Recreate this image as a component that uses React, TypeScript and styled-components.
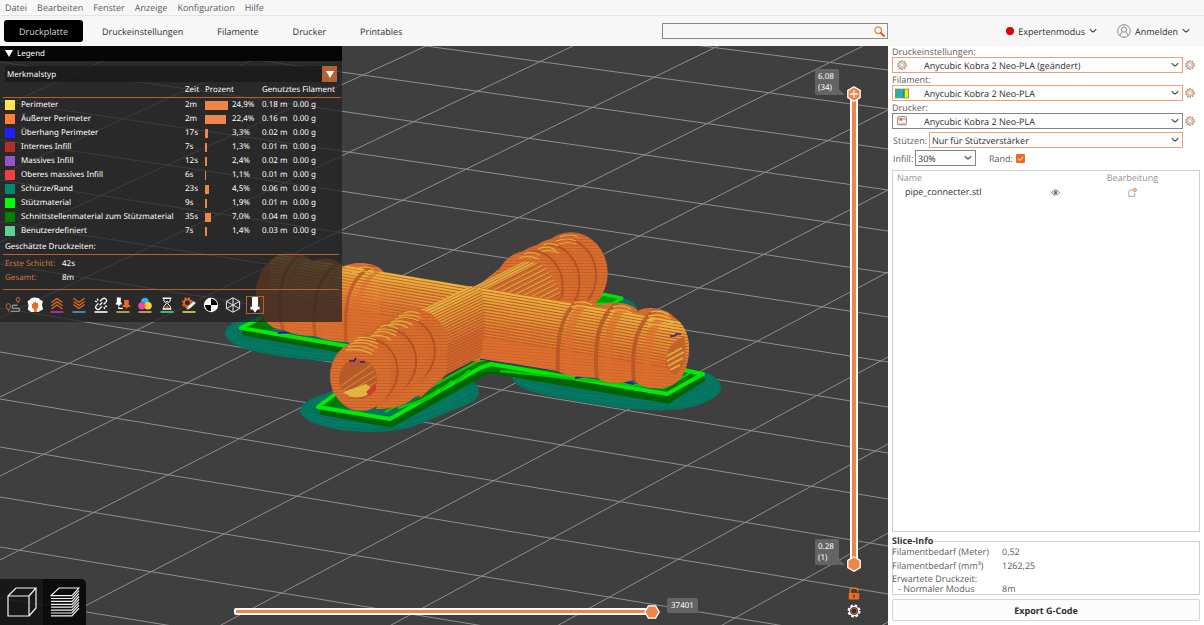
import React from "react";
import styled, { createGlobalStyle, css } from "styled-components";

const ORANGE = "#ed6b21";
const SOFT_ORANGE = "#ee8549";
const UI_FONT = `"Open Sans", "Noto Sans", sans-serif`;
const OVERLAY_FONT = `"Noto Sans", "Open Sans", sans-serif`;

const GlobalStyle = createGlobalStyle`
  * { box-sizing: border-box; }
  html, body, #root { height: 100%; }
  body { margin: 0; background: #fff; font-family: ${UI_FONT}; font-size: 9px; color: #3c3c3c; text-rendering: geometricPrecision; }
  button, input, select { font: inherit; color: inherit; margin: 0; text-rendering: inherit; }
  button { background: none; border: 0; padding: 0; cursor: pointer; }
`;

/* ---------- Page frame ---------- */

const Page = styled.div`
  display: flex;
  flex-direction: column;
  min-height: 100vh;
`;

const MenuBar = styled.nav`
  display: flex;
  gap: 10px;
  height: 16px;
  padding: 0 5px;
  background: #f7f7f7;
  border-bottom: 1px solid #e4e4e4;
`;

const MenuItem = styled.button`
  line-height: 16px;
  color: #5c5c5c;
`;

const TabBar = styled.header`
  display: flex;
  align-items: center;
  height: 30px;
  padding-left: 4px;
  background: #f7f7f7;
`;

const Tab = styled.button<{ $active?: boolean }>`
  height: 22px;
  margin-right: ${(p) => (p.$active ? 2 : 0)}px;
  padding: 0 ${(p) => (p.$active ? 15 : 17)}px;
  border-radius: 3px;
  background: ${(p) => (p.$active ? "#000" : "transparent")};
  color: ${(p) => (p.$active ? "#d8d8d8" : "#2e2e2e")};
`;

const SearchBox = styled.label`
  display: flex;
  align-items: center;
  width: 226px;
  height: 16px;
  margin-left: auto;
  padding-right: 2px;
  border: 1px solid #8b8b8b;
  background: #f7f7f7;
`;

const SearchInput = styled.input`
  flex: 1;
  min-width: 0;
  height: 14px;
  border: 0;
  outline: 0;
  padding: 0 4px;
  background: transparent;
`;

const Account = styled.div`
  display: flex;
  align-items: center;
  justify-content: flex-end;
  gap: 20px;
  width: 316px;
  padding-right: 14px;
  color: #2e2e2e;
`;

const AccountButton = styled.button`
  display: flex;
  align-items: center;
  gap: 4px;
`;

const ModeDot = styled.span`
  width: 8px;
  height: 8px;
  border-radius: 50%;
  background: #e50000;
`;

const Body = styled.main`
  display: flex;
  flex: 1;
`;

/* ---------- Viewport ---------- */

const Viewport = styled.section`
  position: relative;
  flex: 1;
  min-width: 0;
  overflow: hidden;
  background: #3f3f3f;
  font-family: ${OVERLAY_FONT};
  font-size: 8px;
  color: #fff;
`;

const Scene = styled.svg`
  position: absolute;
  inset: 0;
  width: 100%;
  height: 100%;
`;

const LegendPanel = styled.div`
  position: absolute;
  top: 0;
  left: 0;
  width: 342px;
  padding-bottom: 8px;
  background: rgba(34, 34, 34, 0.76);
`;

const LegendTitle = styled.h2`
  display: flex;
  align-items: center;
  gap: 4px;
  height: 15px;
  margin: 0 0 5px;
  padding-left: 5px;
  background: #060606;
  font-size: 8px;
  font-weight: 400;
`;

const FeatureSelectBox = styled.div`
  display: flex;
  height: 16px;
  margin: 0 5px 1px;
  background: rgba(24, 24, 24, 0.75);
`;

const FeatureSelect = styled.select`
  flex: 1;
  appearance: none;
  border: 0;
  outline: 0;
  padding: 0 2px;
  background: transparent;
`;

const FeatureArrow = styled.span`
  display: grid;
  place-items: center;
  width: 15px;
  background: #b36234;
`;

const LegendTable = styled.table`
  width: 338px;
  margin-left: 3px;
  border-collapse: separate;
  border-spacing: 0;
  table-layout: fixed;
  white-space: nowrap;

  th, td { padding: 0; font-weight: 400; text-align: left; line-height: 12px; }
  thead th { height: 15px; border-bottom: 1px solid #b36234; }
  tbody tr { height: 14px; }
`;

const Swatch = styled.span<{ $color: string }>`
  display: block;
  width: 10px;
  height: 10px;
  margin-left: 2px;
  background: ${(p) => p.$color};
`;

const Bar = styled.span`
  display: block;
  height: 9px;
  background: ${SOFT_ORANGE};
`;

const TimesTitle = styled.h3`
  margin: 2px 3px 0;
  padding: 0 2px 1px;
  border-bottom: 1px solid #b36234;
  font-size: 8px;
  font-weight: 400;
  line-height: 13px;
`;

const Times = styled.dl`
  display: grid;
  grid-template-columns: 57px 1fr;
  row-gap: 2px;
  margin: 0 3px;
  padding: 3px 2px 5px;
  border-bottom: 1px solid #b36234;
  line-height: 12px;

  dt { color: #d2753f; }
  dd { margin: 0; }
`;

const LegendTools = styled.div`
  display: flex;
  gap: 4px;
  margin: 6px 4px 0;
`;

const LegendTool = styled.button<{ $active?: boolean }>`
  display: grid;
  place-items: center;
  width: 18px;
  height: 18px;
  border: 1px solid ${(p) => (p.$active ? "#b36234" : "transparent")};
`;

const LayerRail = styled.div`
  position: absolute;
  top: 40px;
  right: 26px;
  bottom: 6px;
  display: flex;
  flex-direction: column;
  align-items: center;
  width: 16px;
`;

const LayerTrack = styled.div`
  position: relative;
  flex: 1;
  width: 8px;
  margin: 7px 0 20px;
  border: 2px solid #fff;
  background: ${SOFT_ORANGE};
`;

const RailButton = styled.button`
  display: grid;
  place-items: center;
  width: 16px;
  height: 17px;
`;

const handleSpot = {
  top: css`top: -9px; left: -6px;`,
  bottom: css`bottom: -9px; left: -6px;`,
  right: css`right: -9px; top: -6px;`,
};

const Handle = styled.svg<{ $at: keyof typeof handleSpot }>`
  position: absolute;
  width: 16px;
  height: 16px;
  ${(p) => handleSpot[p.$at]}
`;

const RangeInput = styled.input<{ $vertical?: boolean }>`
  position: absolute;
  inset: 0;
  width: 100%;
  height: 100%;
  opacity: 0;
  ${(p) => p.$vertical && css`writing-mode: vertical-lr;`}
`;

const LayerTag = styled.output<{ $end: "top" | "bottom" }>`
  position: absolute;
  right: 17px;
  ${(p) => (p.$end === "top" ? css`top: -26px;` : css`bottom: -2px;`)}
  width: 24px;
  height: 26px;
  padding: 2px 3px;
  border-radius: 2px;
  background: #646464;
  line-height: 11px;

  &::after {
    content: "";
    position: absolute;
    right: -6px;
    bottom: 0;
    border: 3px solid transparent;
    border-bottom-color: #646464;
    border-left-color: #646464;
  }
`;

const MoveTrack = styled.div`
  position: absolute;
  left: 234px;
  right: 235px;
  bottom: 10px;
  height: 7px;
  border: 2px solid #fff;
  border-radius: 2px;
  background: ${SOFT_ORANGE};
`;

const MoveTag = styled.output`
  position: absolute;
  right: -47px;
  bottom: 0;
  width: 31px;
  border-radius: 2px;
  background: #646464;
  line-height: 15px;
  text-align: center;
`;

const ViewSwitch = styled.div`
  position: absolute;
  left: 0;
  bottom: 0;
  display: flex;
  border-top-right-radius: 5px;
  overflow: hidden;
`;

const ViewButton = styled.button<{ $active?: boolean }>`
  display: grid;
  place-items: center;
  width: 43px;
  height: 46px;
  background: ${(p) => (p.$active ? "rgba(8, 8, 8, .92)" : "rgba(18, 18, 18, .85)")};
`;

/* ---------- Side panel ---------- */

const Side = styled.aside`
  display: flex;
  flex-direction: column;
  width: 316px;
  padding: 0 4px 4px;
  background: #fff;
`;

const Presets = styled.div`
  display: flex;
  flex-direction: column;
  gap: 1px;
  margin-bottom: 3px;
`;

const PresetLabel = styled.label`
  display: block;
  line-height: 11px;
  color: #5c5c5c;
`;

const PresetRow = styled.div`
  display: flex;
  align-items: center;
  gap: 2px;
`;

const Combo = styled.div<{ $modified?: boolean; $width?: number }>`
  display: flex;
  align-items: center;
  flex: ${(p) => (p.$width ? "none" : 1)};
  width: ${(p) => (p.$width ? `${p.$width}px` : "auto")};
  height: 16px;
  padding: 0 3px 0 2px;
  border: 1px solid ${(p) => (p.$modified ? "#efa078" : "#858585")};
  background: #fdfdfd;
`;

const ComboIcon = styled.span`
  display: flex;
  align-items: center;
  justify-content: center;
  width: 14px;
  margin-right: 15px;
`;

const ComboSelect = styled.select`
  flex: 1;
  min-width: 0;
  height: 14px;
  appearance: none;
  border: 0;
  outline: 0;
  padding: 0;
  background: transparent;
  color: #2e2e2e;
`;

const GearButton = styled.button`
  display: grid;
  align-items: center;
  justify-items: start;
  width: 15px;
  height: 16px;
`;

const OptionRow = styled.div`
  display: flex;
  align-items: center;
  height: 16px;
  margin: 0 17px 2px 1px;
  color: #5c5c5c;
`;

const OptionLabel = styled.label<{ $wide?: boolean }>`
  width: ${(p) => (p.$wide ? 36 : 22)}px;
  white-space: nowrap;
`;

const BrimField = styled.label`
  display: flex;
  align-items: center;
  gap: 3px;
  margin-left: 13px;
`;

const TickWrap = styled.span`
  display: grid;
  width: 9px;
  height: 9px;

  > * { grid-area: 1 / 1; }
  svg { pointer-events: none; z-index: 1; }
`;

const Tick = styled.input`
  appearance: none;
  width: 9px;
  height: 9px;
  border-radius: 1px;
  background: ${ORANGE};
`;

const ObjectBox = styled.div`
  flex: 1;
  margin-top: 2px;
  border: 1px solid #cfcfcf;
`;

const ObjectTable = styled.table`
  width: 100%;
  border-collapse: collapse;
  table-layout: fixed;

  th, td { padding: 0; line-height: 14px; text-align: center; }
  th { font-weight: 400; color: #929292; }
  th:first-child { padding-left: 4px; text-align: left; }
  td:first-child { padding-left: 12px; text-align: left; color: #2e2e2e; }
  svg { display: block; margin: 0 auto; }
`;

const SliceInfo = styled.fieldset`
  min-width: 0;
  margin: 4px 0;
  padding: 0;
  border: 1px solid #cfcfcf;

  legend { margin-left: -1px; padding: 0; line-height: 10px; font-weight: 700; color: #333; }
`;

const SliceTable = styled.table`
  border-collapse: collapse;
  color: #5c5c5c;
  margin-left: -1px;

  th, td { padding: 0; line-height: 12px; font-weight: 400; text-align: left; }
  th { width: 110px; }
`;

const SliceRow = styled.tr<{ $spaced?: boolean; $tight?: boolean; $indent?: boolean }>`
  && > * {
    padding-block: ${(p) => (p.$spaced ? 2 : 0)}px;
    line-height: ${(p) => (p.$tight ? 10 : 12)}px;
  }
  && > th { padding-left: ${(p) => (p.$indent ? 6 : 0)}px; }
`;

const ExportButton = styled.button`
  height: 22px;
  border: 1px solid #d4d4d4;
  border-radius: 2px;
  background: #fcfcfc;
  font-weight: 700;
  color: #2e2e2e;
`;

/* ---------- Small icons ---------- */

const Chevron = () => (
  <svg width="8" height="6" viewBox="0 0 8 6" fill="none" stroke="#4a4a4a" strokeWidth="1.1">
    <path d="M.8 1.2 Q2.6 3.6 4 3.9 Q5.4 3.6 7.2 1.2" />
  </svg>
);

const Gear = () => (
  <svg width="10" height="10" viewBox="0 0 10 10" fill="none">
    <circle cx="5" cy="5" r="4" stroke="#8a7a70" strokeWidth="1.4" strokeDasharray="1.6 .9" />
    <circle cx="5" cy="5" r="3" stroke="#f0b08a" strokeWidth="1.2" />
    <circle cx="5" cy="5" r="1.8" fill="#fff" stroke="#b9a89e" strokeWidth=".6" />
  </svg>
);

const FilamentIcon = () => (
  <svg width="16" height="11" viewBox="0 0 16 11">
    <rect x=".5" y=".5" width="15" height="10" fill="#27b0b0" stroke="#7c8a5a" />
    <rect x="10" y="1" width="1" height="9" fill="#333" />
    <rect x="11" y="1" width="4" height="9" fill="#fbf000" />
  </svg>
);

const PrinterIcon = () => (
  <svg width="10" height="10" viewBox="0 0 10 10" fill="none">
    <rect x=".7" y=".7" width="8.6" height="8" rx=".6" stroke="#808080" />
    <path d="M1 3h8" stroke="#d98a62" />
    <rect x="2.6" y="2" width="2.6" height="2.8" fill={ORANGE} />
    <path d="M2 7.3h6" stroke="#b5b5b5" strokeWidth=".7" />
  </svg>
);

const Hexagon = ({ at, plus }: { at: "top" | "bottom" | "right"; plus?: boolean }) => (
  <Handle $at={at} viewBox="0 0 16 16">
    <path d="M8 .8 14.2 4.4V11.6L8 15.2 1.8 11.6V4.4Z" fill={SOFT_ORANGE} stroke="#fff" strokeWidth="1.3"
      transform={at === "right" ? "rotate(90 8 8)" : undefined} />
    {plus && <path d="M8 4.2v7.6M4.2 8h7.6" stroke="#fff" strokeWidth="1.3" />}
  </Handle>
);

/* ---------- Legend tool icons ---------- */

const toolIcons: { name: string; art: React.ReactNode }[] = [
  { name: "Eilgang", art: (<>
    <path d="M3 12.4 1.6 10.2a2.2 2.2 0 1 1 3.6 0L3.4 14Z" fill="none" stroke="#a3603c" strokeWidth="1.1" />
    <path d="M13 5.6 11.4 3.2a1.8 1.8 0 1 1 3.2 0Z" fill="none" stroke="#a3603c" strokeWidth="1.1" />
    <path d="M5.5 14.4H13a1.6 1.6 0 0 0 0-3.2H8.6a1.5 1.5 0 0 1 0-3h4" fill="none" stroke="#8e8e8e" strokeWidth="1.4" />
  </>) },
  { name: "Wischen", art: (<>
    <path d="M.4 4.4 3 2.6 4.4 1 8 .6l4 .6 1 1.6 2.8 1.2-.8 4 1 4.4-2.6 1.4-2 1.2H4L.8 12.6 1.6 8Z" fill="#fff" />
    <path d="M5 8.6 4.6 6.4l1.4.6.2-1.8 1.2.6L8.6 4.6l1 1.4 1.5.2.1 4L9.8 12v3H7.2v-2.6L5 10.8Z" fill={ORANGE} />
  </>) },
  { name: "Einzüge", art: (<>
    <path d="M2.5 5.5 8 1.5l5.5 4M2.5 8.8 8 4.8l5.5 4M2.5 12 8 8l5.5 4" fill="none" stroke={ORANGE} strokeWidth="1.2" />
    <path d="M1.5 15h13" stroke="#c22bc2" strokeWidth="1.7" />
  </>) },
  { name: "Wiedereinzüge", art: (<>
    <path d="M2.5 1.2 8 5.2l5.5-4M2.5 4.4 8 8.4l5.5-4M2.5 7.6 8 11.6l5.5-4" fill="none" stroke={ORANGE} strokeWidth="1.2" />
    <path d="M1.5 15h13" stroke="#3fa0c8" strokeWidth="1.7" />
  </>) },
  { name: "Nähte", art: (<>
    <path d="M7 4.2 9.4 2a2.3 2.3 0 0 1 3.4 3.2L10.6 7.4M9 9.4 6.6 11.8a2.3 2.3 0 0 1-3.3-3.2L5.4 6.4M4.2 1.6l1 2M2 4.2l2 .6M11.8 12l-.8-2M14 9.6l-2-.8M6.6 8.2 9.4 5.4" fill="none" stroke="#fff" strokeWidth="1.3" />
    <path d="M1.5 15h13" stroke="#f0f0f0" strokeWidth="1.7" />
  </>) },
  { name: "Werkzeugwechsel", art: (<>
    <path d="M1.8 .6h4v5.2h1v1.8H5.2L3.8 9.4 2.4 7.6H.8V5.8h1Z" fill="#fff" />
    <path d="M9.2 3h4.6v5h1.4v2h-2.4L11.5 12l-1.3-2H7.8V8h1.4Z" fill={ORANGE} />
    <path d="M3.8 9.8v1.6h4" fill="none" stroke="#fff" strokeWidth="1.1" />
    <path d="M1.5 15h13" stroke="#c4b24a" strokeWidth="1.7" />
  </>) },
  { name: "Farbwechsel", art: (<>
    <circle cx="8" cy="4.6" r="3.8" fill="#2fb6e8" />
    <circle cx="5" cy="8.8" r="3.8" fill="#e8499a" />
    <circle cx="11" cy="8.8" r="3.8" fill="#f4d33a" />
    <path d="M8 6.4a3.8 3.8 0 0 1 0 4.8 3.8 3.8 0 0 1 0-4.8Z" fill={ORANGE} />
    <path d="M4.6 5.2a3.8 3.8 0 0 1 3.2 1.4 3.8 3.8 0 0 1-3.2-1.4Z" fill="#3b4bb0" />
    <path d="M1.5 15h13" stroke="#e0a080" strokeWidth="1.7" />
  </>) },
  { name: "Druckpausen", art: (<>
    <path d="M3.6 1.2h8.8M3.6 12h8.8" stroke="#fff" strokeWidth="1.6" />
    <path d="M4.8 2v2L7.4 6.6 4.8 9.4V12M11.2 2v2L8.6 6.6l2.6 2.8V12" fill="none" stroke="#fff" strokeWidth="1" />
    <path d="M6 10.8 8 8.6l2 2.2Z" fill={ORANGE} /><path d="M6.4 4h3.2L8 5.8Z" fill="#fff" />
    <path d="M1.5 15h13" stroke="#4fd08a" strokeWidth="1.7" />
  </>) },
  { name: "Benutzerdefinierter G-Code", art: (<>
    <circle cx="6.4" cy="5.8" r="3.4" fill="none" stroke={ORANGE} strokeWidth="1.8" />
    <circle cx="6.4" cy="5.8" r="4.9" fill="none" stroke={ORANGE} strokeWidth="1.4" strokeDasharray="2 1.85" />
    <path d="M5.4 13 6.6 9.6l6-5.6L15 6.2l-6.2 5.6Z" fill="#fff" stroke="#2b2b2b" strokeWidth=".5" />
    <path d="M1.5 15h13" stroke="#e6cf3a" strokeWidth="1.7" />
  </>) },
  { name: "Schwerpunkt", art: (<>
    <circle cx="8" cy="8" r="7.2" fill="#fff" />
    <path d="M8 8H1.8A6.2 6.2 0 0 0 8 14.2ZM8 8h6.2A6.2 6.2 0 0 0 8 1.8Z" fill="#000" />
  </>) },
  { name: "Konturen", art: (
    <path d="M8 .8 14.6 4.4V11.6L8 15.2 1.4 11.6V4.4ZM8 .8V15.2M1.4 4.4 14.6 11.6M14.6 4.4 1.4 11.6" fill="none" stroke="#e6e6e6" strokeWidth="1" />
  ) },
  { name: "Werkzeugmarkierung", art: (
    <path d="M5 0h6v9.8h1.6v2.6h-2.4L8 15.8 5.8 12.4H3.4V9.8H5Z" fill="#fff" />
  ) },
];

/* ---------- Sliced model ---------- */

/** Parallel line segments, each shifted by (dx, dy) from the one before it. */
const hatch = (x1: number, y1: number, x2: number, y2: number, dx: number, dy: number, n: number) =>
  Array.from({ length: n }, (_, i) => `M${x1 + dx * i} ${y1 + dy * i}L${x2 + dx * i} ${y2 + dy * i}`).join("");

/** Yellow tops of the upper layers, thinning out as the wall turns vertical. */
const FadingLayers = ({ line, step, count }: { line: [number, number, number, number]; step: number; count: number }) => (
  <g stroke="#e6b840" fill="none">
    {Array.from({ length: count }, (_, i) => (
      <path key={i} d={hatch(line[0], line[1] + step * i, line[2], line[3] + step * i, 0, 0, 1)}
        strokeWidth={2 - (1.1 * i) / count} opacity={1 - (0.8 * i) / count} />
    ))}
  </g>
);

const bedLinesAlong: [number, number][] = [
  [-45, 70], [-12, 109], [24, 149], [62, 190], [101, 231], [140, 273], [180, 317], [222, 362],
  [264, 407], [308, 453], [352, 499], [399, 546], [447, 594], [497, 643], [547, 692], [598, 742],
];
const bedLinesAcross: [number, number, number, number][] = [
  [0, 108, 135, 46], [0, 175, 283, 46], [0, 242, 426, 46], [0, 318, 573, 46], [0, 397, 718, 46],
  [0, 476, 863, 46], [0, 560, 888, 110], [0, 650, 888, 190], [0, 742, 888, 272], [0, 836, 888, 357],
  [0, 932, 888, 444], [0, 1026, 888, 533], [0, 1120, 888, 622],
];

const LEFT_ARM = "M256 292C257 270 272 253 291 253C303 253 308 257 312 261C320 257 338 257 343 267C350 262 374 260 384 272L480 288V362L345 342C330 341 322 339 315 336C300 336 290 333 283 330C268 330 256 312 256 292Z";
const RIGHT_ARM = "M470 286L568 302C573 298 592 299 598 306C604 302 630 300 638 311C645 306 665 307 674 317C686 325 690 340 689 350C688 372 680 387 660 388C648 389 640 386 633 380C622 384 608 385 597 378C588 377 570 378 557 371L470 357Z";
const FRONT_SHAFT = "M395 322C402 312 412 308 424 309L470 286L481 290C486 310 486 335 480 357L447 374L420 398Z";

const frontRings = Array.from({ length: 25 }, (_, i) => {
  const t = i / 24;
  const swell = 1.8 * Math.cos(t * Math.PI * 6);
  return { cx: 414 - 53 * t, cy: 346 + 30 * t, rx: 32 - 3 * t + swell, ry: 35 - 2 * t + swell, shade: swell < -1.4 };
});
const backRings = Array.from({ length: 19 }, (_, i) => {
  const t = i / 18;
  const swell = 1.5 * Math.cos(t * Math.PI * 6);
  return { cx: 571 - 45 * t, cy: 273 + 17 * t, rx: 35 - 5 * t + swell, ry: 39 - 2 * t + swell, shade: swell < -1.2 };
});

const Model = () => (
  <Scene viewBox="0 46 888 579" preserveAspectRatio="xMidYMid slice" aria-label="Druckvorschau">
    <defs>
      <pattern id="layers" width="8" height="3" patternUnits="userSpaceOnUse">
        <rect width="8" height="3" fill="#dc6e2e" />
        <rect width="8" height="1" y="2" fill="#c4602a" />
      </pattern>
      <pattern id="layersTilted" width="8" height="3" patternUnits="userSpaceOnUse" patternTransform="rotate(4)">
        <rect width="8" height="3" fill="#dd6f2f" />
        <rect width="8" height="1" y="2" fill="#cb652b" />
      </pattern>
      <clipPath id="leftClip"><path d={LEFT_ARM} /></clipPath>
      <clipPath id="rightClip"><path d={RIGHT_ARM} /></clipPath>
      <clipPath id="frontClip"><path d={FRONT_SHAFT} /></clipPath>
      <clipPath id="backClip"><path d="M471 288L525 261L541 264C553 274 561 290 563 303L480 292Z" /></clipPath>
    </defs>

    <g stroke="#8f8f8f" strokeWidth="1">
      {bedLinesAlong.map(([a, b]) => <path key={a} d={`M0 ${a}L888 ${b}`} />)}
      {bedLinesAcross.map(([a, b, c, d]) => <path key={b} d={`M${a} ${b}L${c} ${d}`} />)}
    </g>

    {/* brim */}
    <g fill="#04745f">
      <path d="M225 333C226 322 245 318 262 314L375 345V363C320 363 262 356 240 347C230 343 225 338 225 333Z" />
      <path d="M300 411C301 400 320 395 335 391L470 380C480 384 482 395 474 401C460 408 440 415 425 422C405 431 375 434 350 431C322 428 300 420 300 411Z" />
      <path d="M512 377C514 388 535 394 570 400C610 408 640 411 668 410C698 409 722 398 721 387C720 378 710 373 700 371Z" />
      <path d="M612 296C628 297 637 303 638 312L620 306Z" />
    </g>
    <g fill="none" stroke="#08806a" strokeWidth=".8">
      <path d="M230 334C231 325 246 321 258 319M235 335C236 328 246 324 254 322M230 336C234 346 280 355 360 360M236 336C244 345 290 353 360 356" />
      <path d="M305 411C306 403 322 398 334 395M305 413C312 424 350 428 380 427C420 425 445 408 470 398M310 411C312 405 320 401 330 398M310 413C320 421 350 425 378 424C415 421 440 404 470 392M432 410C450 405 465 397 473 388M425 408C445 403 458 394 466 386" />
      <path d="M518 381C535 391 590 401 660 405C695 405 716 396 716 387C715 380 708 376 701 375M526 382C550 391 600 399 662 401C692 401 711 393 711 387C710 381 706 378 700 377M675 398C692 396 705 391 705 386" />
    </g>

    {/* support frames */}
    <g fill="none" strokeLinejoin="round">
      <path d="M243 332L345 350M320 411L391 424L482 373L492 370L668 400L704 377" stroke="#006400" strokeWidth="7" />
      <path d="M243 328L262 316L300 330Z M318 406L337 392L400 410Z M640 385L685 370L700 374L668 392Z M400 410L480 358L500 358L560 372L480 372Z" fill="#007a00" />
      <path d="M592 304L603 294L622 298L613 304Z" fill="#00a000" stroke="#00e400" strokeWidth="3" />
      <path d="M262 317L241 328L370 350" stroke="#04ea04" strokeWidth="4" />
      <path d="M338 392L318 407L390 419L480 368L491 364L667 394L703 374L684 370" stroke="#04ea04" strokeWidth="4" />
      <path d="M385 412L478 361L492 358L520 364M500 371L664 388L690 373M398 408L430 398M425 399L437 391M440 391L452 381M455 383L470 370" stroke="#04c804" strokeWidth="2.4" />
    </g>

    {/* overhangs */}
    <path d="M470 357L562 371M278 333L290 332M296 329L306 331M331 335L344 339M575 378L585 376M600 376L606 379M622 381L634 384" stroke="#1d18a8" strokeWidth="2.2" fill="none" />

    {/* rear left arm */}
    <path d={LEFT_ARM} fill="url(#layersTilted)" />
    <g clipPath="url(#leftClip)" fill="none">
      <path d={hatch(380, 275, 480, 291, 0, 3, 14)} stroke="#bd5b27" strokeWidth="1" />
      <FadingLayers line={[270, 254, 480, 289.5]} step={3} count={14} />
      <path d="M300 255C280 268 276 300 283 330M340 262C318 275 311 300 315 338M376 264C350 276 343 300 346 342" stroke="#b95625" strokeWidth="3.4" opacity=".8" />
      <path d="M304 258C290 268 284 296 290 332M345 264C330 274 322 300 326 338M382 268C362 278 354 300 358 342" stroke="#dc6e2e" strokeWidth="5" opacity=".6" />
      <path d="M356 269q9 -4 18 0M352 273q12 -4 22 0" stroke="#e2b340" strokeWidth="1.2" />
    </g>

    {/* rear right arm */}
    <g>
      <path d="M480 284L500 268L535 255L560 300Z" fill="url(#layers)" />
      {backRings.map((r, i) => (
        <ellipse key={i} cx={r.cx} cy={r.cy} rx={r.rx} ry={r.ry} fill="url(#layers)"
          stroke={r.shade ? "#b25223" : "#c9632b"} strokeWidth={r.shade ? 2 : 0.5} />
      ))}
      <path d="M560 237q9 -4 18 0M556 241q10 -4 20 0M559 244q9 -3 18 0M543 245q8 -3 15 1M538 249q9 -4 18 1M541 252q9 -3 18 1M524 254q8 -3 16 1M519 258q9 -3 20 1" fill="none" stroke="#dcae3e" strokeWidth="1.2" />
      <g clipPath="url(#backClip)">
        <rect x="465" y="255" width="110" height="60" fill="#d0672c" />
        <path d={hatch(470, 293, 545, 255, 3, 3.6, 16)} stroke="#b4582a" strokeWidth="1.2" />
        <path d={hatch(470, 289, 545, 251, 1.5, 2, 3)} stroke="#dfb140" strokeWidth="1.6" />
        <path d={hatch(474, 295, 549, 257, 3, 3.6, 9)} stroke="#d7a23c" strokeWidth="1.3" />
      </g>
    </g>

    {/* right arm */}
    <path d={RIGHT_ARM} fill="url(#layersTilted)" />
    <g clipPath="url(#rightClip)" fill="none">
      <path d={hatch(470, 289, 690, 326, 0, 3, 16)} stroke="#c05d28" strokeWidth="1" />
      <FadingLayers line={[470, 287.5, 690, 324.5]} step={3} count={16} />
      <path d="M580 299C562 312 556 335 558 374M618 303C600 314 593 338 597 380M659 308C639 318 630 342 634 384" stroke="#b55425" strokeWidth="4" opacity=".8" />
      <path d="M587 300C571 314 565 338 569 378M627 304C611 316 604 340 608 384M669 312C651 322 643 346 647 388" stroke="#dc6e2e" strokeWidth="8" opacity=".6" />
      <path d="M574 303q9 -3 18 2M571 307q12 -3 22 2M613 307q9 -3 18 2M610 311q12 -3 22 2M651 312q9 -3 18 3M648 316q12 -3 23 3M647 320q13 -3 26 3M648 325q13 -2 26 3" stroke="#e2b340" strokeWidth="1.4" />
    </g>
    <path d="M684 337C672 340 665 352 666 364C667 371 671 374 676 374C684 368 688 352 684 337Z" fill="#c4622c" />
    <path d="M667 356L682 348M667 361L684 352M668 366L683 358M670 370L680 365" stroke="#e0b23e" strokeWidth="1.6" />
    <path d="M670 336h5l1 -2h5" stroke="#2a1b9a" strokeWidth="1.6" fill="none" />

    {/* front arm */}
    <path d={FRONT_SHAFT} fill="#d0672c" />
    <g clipPath="url(#frontClip)">
      <path d={hatch(390, 330, 490, 282, 0, 3, 34)} stroke="#b75727" strokeWidth="1" />
      <FadingLayers line={[390, 325, 490, 278]} step={3} count={16} />
    </g>
    <path d="M376 409C400 409 410 402 414 397C422 396 430 390 433 384C443 381 448 372 447 358L400 340Z" fill="url(#layers)" />
    {frontRings.map((r, i) => (
      <ellipse key={i} cx={r.cx} cy={r.cy} rx={r.rx} ry={r.ry} fill="url(#layers)"
        stroke={r.shade ? "#b25223" : "#c9632b"} strokeWidth={r.shade ? 2 : 0.5} />
    ))}
    <path d="M404 313q8 -3 16 1M399 316q11 -3 22 2M395 319q12 -4 24 2M391 322q12 -3 22 3M388 325q10 -3 20 3M380 327q8 -4 18 2M377 330q11 -3 20 2M374 333q12 -4 22 3M371 336q12 -2 20 4M358 338q8 -2 18 2M354 341q12 -3 24 3M350 344q14 -4 28 4M348 347q14 -3 26 4M346 350q14 -2 26 4" fill="none" stroke="#dcae3e" strokeWidth="1.3" />
    <ellipse cx="358" cy="379" rx="19" ry="20" fill="#b85a29" />
    <path d="M341 386L371 365M342 391L374 371M344 395L376 376M349 397L376 382" stroke="#c98636" strokeWidth="1.2" />
    <path d="M343 392Q358 404 374 390L366 384Z" fill="#e2b540" />
    <path d="M366 392L376 383V390L370 396Z" fill="#cf3d2c" />
    <path d="M349 361h5l2 -3M360 362h5" stroke="#2a1b9a" strokeWidth="1.7" fill="none" />
  </Scene>
);

/* ---------- Data ---------- */

const features: [string, string, string, number, string, string][] = [
  ["#ffe64d", "Perimeter", "2m", 23, "24,9%", "0.18 m"],
  ["#ff7d38", "Äußerer Perimeter", "2m", 21, "22,4%", "0.16 m"],
  ["#1f1fff", "Überhang Perimeter", "17s", 3, "3,3%", "0.02 m"],
  ["#b03029", "Internes Infill", "7s", 2, "1,3%", "0.01 m"],
  ["#9654cc", "Massives Infill", "12s", 2, "2,4%", "0.02 m"],
  ["#f04040", "Oberes massives Infill", "6s", 1, "1,1%", "0.01 m"],
  ["#00876e", "Schürze/Rand", "23s", 4, "4,5%", "0.06 m"],
  ["#00ff00", "Stützmaterial", "9s", 2, "1,9%", "0.01 m"],
  ["#008000", "Schnittstellenmaterial zum Stützmaterial", "35s", 6, "7,0%", "0.04 m"],
  ["#5ed194", "Benutzerdefiniert", "7s", 2, "1,4%", "0.03 m"],
];

const presets = [
  { id: "print", label: "Druckeinstellungen:", value: "Anycubic Kobra 2 Neo-PLA (geändert)", modified: true, icon: <Gear /> },
  { id: "filament", label: "Filament:", value: "Anycubic Kobra 2 Neo-PLA", modified: true, icon: <FilamentIcon /> },
  { id: "printer", label: "Drucker:", value: "Anycubic Kobra 2 Neo-PLA", modified: false, icon: <PrinterIcon /> },
];

export default function App() {
  return (
    <Page>
      <GlobalStyle />
      <MenuBar>
        {["Datei", "Bearbeiten", "Fenster", "Anzeige", "Konfiguration", "Hilfe"].map((m) => <MenuItem key={m}>{m}</MenuItem>)}
      </MenuBar>
      <TabBar>
        {["Druckplatte", "Druckeinstellungen", "Filamente", "Drucker", "Printables"].map((t, i) => (
          <Tab key={t} $active={i === 0}>{t}</Tab>
        ))}
        <SearchBox>
          <SearchInput aria-label="Suche" />
          <svg width="11" height="11" viewBox="0 0 11 11" fill="none">
            <circle cx="4.2" cy="4.2" r="3.2" stroke={ORANGE} strokeWidth="1.1" />
            <path d="M6.8 6.8 10 10" stroke="#b0602f" strokeWidth="1.8" strokeLinecap="round" />
          </svg>
        </SearchBox>
        <Account>
          <AccountButton><ModeDot />Expertenmodus <Chevron /></AccountButton>
          <AccountButton>
            <svg width="14" height="14" viewBox="0 0 14 14" fill="none" stroke="#7d7d7d" strokeWidth=".9">
              <circle cx="7" cy="7" r="6.3" /><circle cx="7" cy="5.6" r="2.6" /><path d="M2.8 11.6Q3.6 8.8 5.4 8.2M11.2 11.6Q10.4 8.8 8.6 8.2" />
            </svg>
            Anmelden <Chevron />
          </AccountButton>
        </Account>
      </TabBar>

      <Body>
        <Viewport>
          <Model />

          <LegendPanel>
            <LegendTitle>
              <svg width="8" height="7" viewBox="0 0 8 7"><path d="M0 0h8L4 7Z" fill="#fff" /></svg>
              Legend
            </LegendTitle>
            <FeatureSelectBox>
              <FeatureSelect aria-label="Ansicht"><option>Merkmalstyp</option></FeatureSelect>
              <FeatureArrow><svg width="8" height="7" viewBox="0 0 8 7"><path d="M0 0h8L4 7Z" fill="#fff" /></svg></FeatureArrow>
            </FeatureSelectBox>
            <LegendTable>
              <colgroup>
                <col width="18" /><col width="164" /><col width="20" /><col width="27" /><col width="30" /><col width="31" /><col width="48" />
              </colgroup>
              <thead>
                <tr><th /><th /><th>Zeit</th><th colSpan={2}>Prozent</th><th colSpan={2}>Genutztes Filament</th></tr>
              </thead>
              <tbody>
                {features.map(([color, name, time, bar, pct, len]) => (
                  <tr key={name}>
                    <td><Swatch $color={color} /></td>
                    <td>{name}</td>
                    <td>{time}</td>
                    <td><Bar style={{ width: bar }} /></td>
                    <td>{pct}</td>
                    <td>{len}</td>
                    <td>0.00 g</td>
                  </tr>
                ))}
              </tbody>
            </LegendTable>
            <TimesTitle>Geschätzte Druckzeiten:</TimesTitle>
            <Times>
              <dt>Erste Schicht:</dt><dd>42s</dd>
              <dt>Gesamt:</dt><dd>8m</dd>
            </Times>
            <LegendTools>
              {toolIcons.map((t, i) => (
                <LegendTool key={t.name} aria-label={t.name} $active={i === toolIcons.length - 1}>
                  <svg width="16" height="16" viewBox="0 0 16 16">{t.art}</svg>
                </LegendTool>
              ))}
            </LegendTools>
          </LegendPanel>

          <LayerRail>
            <LayerTrack>
              <RangeInput $vertical type="range" aria-label="Schicht" min={1} max={34} defaultValue={34} />
              <LayerTag $end="top">6.08<br />(34)</LayerTag>
              <Hexagon at="top" plus />
              <LayerTag $end="bottom">0.28<br />(1)</LayerTag>
              <Hexagon at="bottom" />
            </LayerTrack>
            <RailButton aria-label="Sperre">
              <svg width="12" height="13" viewBox="0 0 12 13" fill="none">
                <path d="M2.2 6.4V3.4A2 2 0 0 1 4.2 1.2h3.6a2 2 0 0 1 2 2v1.2" stroke={ORANGE} strokeWidth="1.6" />
                <rect x=".8" y="6" width="10.4" height="6.6" rx=".6" fill={ORANGE} />
                <path d="M6 7.8v2.8" stroke="#3f3f3f" strokeWidth="1.6" />
              </svg>
            </RailButton>
            <RailButton aria-label="Einstellungen">
              <svg width="14" height="14" viewBox="0 0 14 14" fill="none">
                <circle cx="7" cy="7" r="5.6" stroke="#fff" strokeWidth="1.8" strokeDasharray="2.6 1.8" />
                <circle cx="7" cy="7" r="4.6" stroke="#fff" strokeWidth="1.1" />
                <circle cx="7" cy="7" r="3" fill="#333" stroke="#c0683c" strokeWidth=".9" />
              </svg>
            </RailButton>
          </LayerRail>

          <MoveTrack>
            <RangeInput type="range" aria-label="Bewegung" min={1} max={37401} defaultValue={37401} />
            <Hexagon at="right" />
            <MoveTag>37401</MoveTag>
          </MoveTrack>

          <ViewSwitch>
            <ViewButton aria-label="3D-Editor-Ansicht">
              <svg width="30" height="30" viewBox="0 0 30 30" fill="none" stroke="#f2f2f2" strokeWidth="1.2">
                <path d="M1 9H22V29H1ZM1 9 9 1H29L22 9M29 1V21L22 29" />
              </svg>
            </ViewButton>
            <ViewButton $active aria-label="Vorschau">
              <svg width="30" height="30" viewBox="0 0 30 30" fill="none" stroke="#f2f2f2" strokeWidth="1.2">
                <path d="M1 8.6 9 1H29L22 8.6Z" />
                {[11.5, 14.4, 17.3, 20.2, 23.1, 26, 28.9].map((y) => <path key={y} d={`M1 ${y}H22L29 ${y - 7.8}`} />)}
              </svg>
            </ViewButton>
          </ViewSwitch>
        </Viewport>

        <Side>
          <Presets>
            {presets.map((p) => (
              <div key={p.id}>
                <PresetLabel htmlFor={p.id}>{p.label}</PresetLabel>
                <PresetRow>
                  <Combo $modified={p.modified}>
                    <ComboIcon>{p.icon}</ComboIcon>
                    <ComboSelect id={p.id}><option>{p.value}</option></ComboSelect>
                    <Chevron />
                  </Combo>
                  <GearButton aria-label={`${p.label} bearbeiten`}><Gear /></GearButton>
                </PresetRow>
              </div>
            ))}
          </Presets>
          <OptionRow>
            <OptionLabel $wide htmlFor="supports">Stützen:</OptionLabel>
            <Combo $modified>
              <ComboSelect id="supports"><option>Nur für Stützverstärker</option></ComboSelect>
              <Chevron />
            </Combo>
          </OptionRow>
          <OptionRow>
            <OptionLabel htmlFor="infill">Infill:</OptionLabel>
            <Combo $width={61}>
              <ComboSelect id="infill"><option>30%</option></ComboSelect>
              <Chevron />
            </Combo>
            <BrimField>
              Rand:
              <TickWrap>
                <Tick type="checkbox" defaultChecked />
                <svg width="9" height="9" viewBox="0 0 9 9"><path d="M2 4.6 4 6.4 7.2 2.8" fill="none" stroke="#fff" strokeWidth="1" /></svg>
              </TickWrap>
            </BrimField>
          </OptionRow>

          <ObjectBox>
            <ObjectTable>
              <colgroup><col width="153" /><col width="18" /><col width="137" /></colgroup>
              <thead><tr><th>Name</th><th /><th>Bearbeitung</th></tr></thead>
              <tbody>
                <tr>
                  <td>pipe_connecter.stl</td>
                  <td>
                    <svg width="9" height="7" viewBox="0 0 9 7" fill="none" stroke="#6a6a6a" strokeWidth=".9">
                      <path d="M.5 3.5Q4.5-1.6 8.5 3.5 4.5 8.6.5 3.5Z" /><circle cx="4.5" cy="3.5" r="1.3" fill="#6a6a6a" />
                    </svg>
                  </td>
                  <td>
                    <svg width="9" height="9" viewBox="0 0 9 9" fill="none">
                      <path d="M5 2H2.2Q.8 2 .8 3.4V8.4H6.8V4.6" stroke="#a0a0a0" strokeWidth=".9" />
                      <circle cx="7" cy="2" r="1.4" stroke={ORANGE} strokeWidth="1" />
                    </svg>
                  </td>
                </tr>
              </tbody>
            </ObjectTable>
          </ObjectBox>

          <SliceInfo>
            <legend>Slice-Info</legend>
            <SliceTable>
              <tbody>
                <SliceRow><th>Filamentbedarf (Meter)</th><td>0,52</td></SliceRow>
                <SliceRow $spaced><th>Filamentbedarf (mm³)</th><td>1262,25</td></SliceRow>
                <SliceRow $tight><th>Erwartete Druckzeit:</th><td /></SliceRow>
                <SliceRow $tight $indent><th>- Normaler Modus</th><td>8m</td></SliceRow>
              </tbody>
            </SliceTable>
          </SliceInfo>
          <ExportButton>Export G-Code</ExportButton>
        </Side>
      </Body>
    </Page>
  );
}
